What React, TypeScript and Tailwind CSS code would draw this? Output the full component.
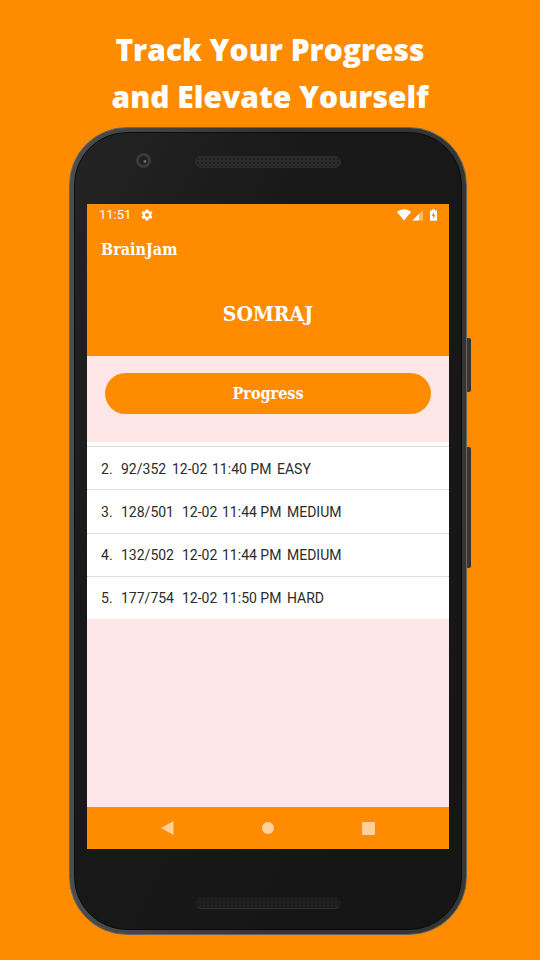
import React from "react";

type Result = { rank: number; score: string; date: string; time: string; level: string };

const results: Result[] = [
  { rank: 2, score: "92/352", date: "12-02", time: "11:40 PM", level: "EASY" },
  { rank: 3, score: "128/501", date: "12-02", time: "11:44 PM", level: "MEDIUM" },
  { rank: 4, score: "132/502", date: "12-02", time: "11:44 PM", level: "MEDIUM" },
  { rank: 5, score: "177/754", date: "12-02", time: "11:50 PM", level: "HARD" },
];

function Grille({ dim }: { dim?: boolean }) {
  return (
    <div
      className={
        dim
          ? "h-3 w-[146px] rounded-full border border-b-[#303030] border-[#1c1c1c] bg-[#202020] bg-[radial-gradient(#191919_1px,transparent_1px)] bg-[length:4px_4px]"
          : "h-3 w-[146px] rounded-full border border-[#2c2c2c] bg-[#2b2b2b] bg-[radial-gradient(#1e1e1e_1px,transparent_1px)] bg-[length:4px_4px]"
      }
    />
  );
}

function StatusBar() {
  return (
    <div className="flex h-[22px] items-center justify-between px-3 text-white">
      <div className="flex items-center gap-[9px]">
        <span className="font-['Roboto',sans-serif] text-[13px] leading-4 font-normal">11:51</span>
        <svg className="size-[14px]" viewBox="0 0 24 24" fill="currentColor" aria-hidden="true">
          <path d="M19.14 12.94c.04-.3.06-.61.06-.94 0-.32-.02-.64-.07-.94l2.03-1.58a.49.49 0 0 0 .12-.61l-1.92-3.32a.49.49 0 0 0-.59-.22l-2.39.96a7 7 0 0 0-1.62-.94l-.36-2.54a.48.48 0 0 0-.48-.41h-3.84a.48.48 0 0 0-.47.41l-.36 2.54c-.59.24-1.13.57-1.62.94l-2.39-.96a.48.48 0 0 0-.59.22L2.74 8.87a.48.48 0 0 0 .12.61l2.03 1.58a6 6 0 0 0-.02 1.88l-2.03 1.58a.49.49 0 0 0-.12.61l1.92 3.32c.12.22.37.29.59.22l2.39-.96c.5.38 1.03.7 1.62.94l.36 2.54c.05.24.24.41.48.41h3.84c.24 0 .44-.17.47-.41l.36-2.54c.59-.24 1.13-.56 1.62-.94l2.39.96c.22.08.47 0 .59-.22l1.92-3.32a.48.48 0 0 0-.12-.61zM12 15.6A3.6 3.6 0 1 1 12 8.4a3.6 3.6 0 0 1 0 7.2z" />
        </svg>
      </div>
      <svg className="h-3 w-10" viewBox="0 0 40 12" aria-hidden="true">
        <path d="M0 3C4-.8 10-.8 14 3L7 11.500z" fill="#fff" />
        <path d="M15.500 11.500L26 1v10.500z" fill="#fff" opacity=".4" />
        <path d="M15.500 11.500L22 5v6.500z" fill="#fff" />
        <path d="M33 1.500h2V.300h3v1.200h2v10.200h-7z" fill="#fff" />
        <path d="M37 3l-2.500 4h1.700v3l2.500-4.200H37z" fill="#ff8c00" />
      </svg>
    </div>
  );
}

function NavigationBar() {
  const button = "flex h-full w-[100px] items-center justify-center text-[#ffd099]";
  return (
    <nav className="flex h-[42px] justify-center bg-[#ff8c00]">
      <button type="button" aria-label="Back" className={button}>
        <svg className="size-[14px]" viewBox="0 0 14 14" fill="currentColor">
          <path d="M0 7L12.500 0v14z" />
        </svg>
      </button>
      <button type="button" aria-label="Home" className={button}>
        <span className="size-3 rounded-full bg-current" />
      </button>
      <button type="button" aria-label="Recent apps" className={button}>
        <span className="size-[13px] rounded-[1px] bg-current" />
      </button>
    </nav>
  );
}

export default function App() {
  return (
    <main className="min-h-screen bg-[#ff8c00] pt-[26px] pb-6">
      <h1 className="text-center font-['Open_Sans',sans-serif] text-[30px] leading-[47px] font-extrabold text-white">
        Track Your Progress
        <br />
        and Elevate Yourself
      </h1>

      <div className="relative mt-[7px] mr-[73px] ml-[69px]">
        <div className="absolute top-[211px] -right-1 h-[54px] w-3 rounded-r-[2px] bg-linear-to-r from-[#292929] via-[#403d3d] to-[#303238]" />
        <div className="absolute top-[320px] -right-1 h-[121px] w-3 rounded-r-[2px] bg-linear-to-r from-[#292929] via-[#403d3d] to-[#303238]" />

        <div className="relative rounded-[58px] border border-[#626760] bg-linear-to-r from-[#4b4e4c] via-[#333533] to-[#343633] p-[4px]">
          <div className="rounded-[53px] border border-[#0b0b0b] bg-linear-to-br from-[#242424] via-[#191919] via-30% to-[#151515] px-3">
            <div className="relative flex h-[71px] items-center justify-center pb-[14px]">
              <span className="absolute top-5 left-[49px] flex size-[15px] items-center justify-center rounded-full bg-[#3a3a3a]">
                <span className="size-[9px] rounded-full bg-[#211f22] bg-[radial-gradient(circle_at_65%_60%,#74606f_1px,transparent_2px)]" />
              </span>
              <Grille />
            </div>

            <section className="flex h-[645px] flex-col bg-[#ffe6e6]">
              <header className="h-[152px] bg-[#ff8c00] font-['DejaVu_Serif_Condensed','DejaVu_Serif',serif] font-bold text-white">
                <StatusBar />
                <p className="px-[14px] pt-3 text-base leading-6">BrainJam</p>
                <h2 className="pt-10 text-center text-[21px] leading-6">SOMRAJ</h2>
              </header>

              <div className="px-[18px] pt-[17px] pb-7">
                <button
                  type="button"
                  className="h-[41px] w-full rounded-full bg-[#ff8c00] font-['DejaVu_Serif_Condensed','DejaVu_Serif',serif] text-base font-bold text-white"
                >
                  Progress
                </button>
              </div>

              <ol className="grid h-[177px] grid-rows-4 bg-white pt-1 font-['Roboto',sans-serif] text-sm text-[#2b2b2b]">
                {results.map((r) => (
                  <li key={r.rank} className="flex items-center border-t border-[#dedede] px-[14px] pt-px">
                    <span className="w-5">{r.rank}.</span>
                    <span className={r.score.length > 6 ? "w-[61px]" : "w-[51px]"}>{r.score}</span>
                    <span className="w-10">{r.date}</span>
                    <span className="w-[65px] whitespace-nowrap">{r.time}</span>
                    <span>{r.level}</span>
                  </li>
                ))}
              </ol>

              <div className="flex-1" />
              <NavigationBar />
            </section>

            <div className="flex h-20 items-center justify-center pt-7">
              <Grille dim />
            </div>
          </div>
        </div>
      </div>
    </main>
  );
}
